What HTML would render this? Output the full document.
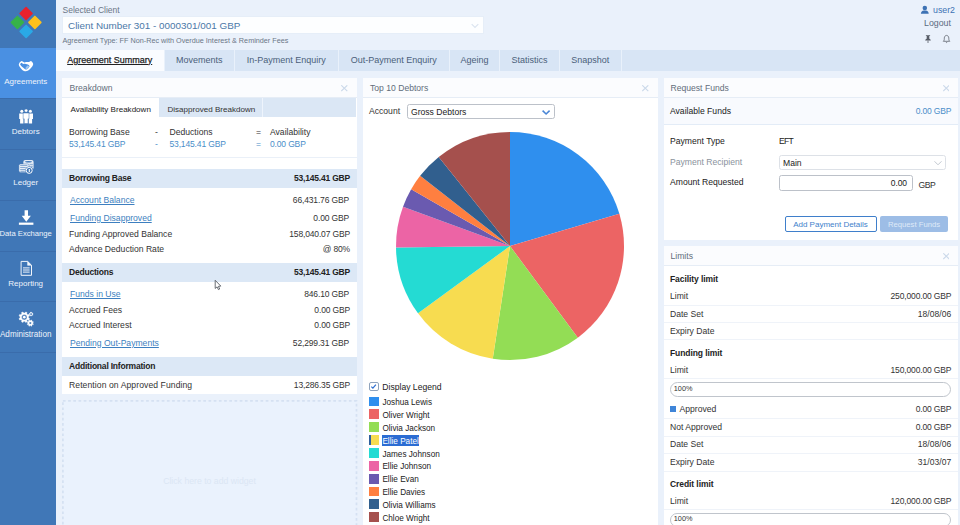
<!DOCTYPE html>
<html lang="en"><head><meta charset="utf-8"><title>Agreement Summary</title>
<style>
*{box-sizing:border-box;margin:0;padding:0}
html,body{width:960px;height:525px;overflow:hidden}
body{font-family:"Liberation Sans",sans-serif;font-size:8.5px;color:#333;background:#eaf1fb;position:relative}
.abs,.t{position:absolute;white-space:nowrap}
.t{line-height:12px;font-size:8.6px}
.r{text-align:right;font-size:8.5px;letter-spacing:-0.15px}
.b{font-weight:bold;color:#222;font-size:8.5px;letter-spacing:-0.2px}
.blue{color:#4a8ec9;font-size:8.5px;letter-spacing:-0.15px}
.lnk{color:#3d7fc0;text-decoration:underline}
#side{position:absolute;left:0;top:0;width:55.7px;overflow:hidden;height:525px;background:#4077b7}
.nav{position:absolute;left:0;width:57px;height:51.8px;border-bottom:1px solid #3a6cab;color:#fff;text-align:center}
.nav span{position:absolute;left:-12px;right:-6.4px;top:28.6px;font-size:8px;line-height:10px;color:#edf3fb}
.nav.on{background:#4a90e2}
.nav svg{position:absolute}
#tabs{position:absolute;left:55.7px;top:49.5px;width:905px;height:21px;background:#d8e5f5}
.tab{position:absolute;top:0;height:21px;border-right:1px solid #e9f1fb;font-size:9px;line-height:21px;color:#4b5f7a;text-align:center}
.tab.on{background:#fafcff;color:#222;text-decoration:underline;-webkit-text-stroke:0.25px #222}
.panel{position:absolute;background:#fff}
.ph{position:absolute;left:0;top:0;right:0;height:19.7px;background:#fbfcfe;border-bottom:1px solid #e6edf6;color:#626d7b}
.band{position:absolute;left:0;right:0;height:19px;background:#dce8f6}
.sep{position:absolute;left:0;right:0;height:1px;background:#eff3f9}
</style></head><body>

<div id="side">
  <svg class="abs" style="left:0;top:0" width="56" height="48" viewBox="0 0 56 48">
    <path d="M26.1 7.55L32.050 13.5L26.1 19.45L20.150 13.5Z" fill="#e8212d" stroke="#e8212d" stroke-width="1.6" stroke-linejoin="round"/>
    <path d="M17.4 16.45L23.349 22.4L17.4 28.349L11.45 22.4Z" fill="#37b24a" stroke="#37b24a" stroke-width="1.6" stroke-linejoin="round"/>
    <path d="M34.9 16.45L40.85 22.4L34.9 28.349L28.95 22.4Z" fill="#fdc11c" stroke="#fdc11c" stroke-width="1.6" stroke-linejoin="round"/>
    <path d="M26.1 25.45L32.050 31.4L26.1 37.35L20.150 31.4Z" fill="#2aa9e6" stroke="#2aa9e6" stroke-width="1.6" stroke-linejoin="round"/>
  </svg>
  <div class="nav on" style="top:48px;height:51.2px"><span>Agreements</span></div>
  <div class="nav" style="top:98.2px"><span>Debtors</span></div>
  <div class="nav" style="top:149px"><span>Ledger</span></div>
  <div class="nav" style="top:199.8px"><span style="font-size:7.65px;top:29.2px">Data Exchange</span></div>
  <div class="nav" style="top:250.6px"><span>Reporting</span></div>
  <div class="nav" style="top:301.4px"><span style="font-size:8.15px">Administration</span></div>
  <svg class="abs" style="left:0;top:48px" width="56" height="310" viewBox="0 48 56 310">
    <!-- handshake -->
    <path d="M18.8 64.6C18.9 63.2 20 61.6 21.6 60.9C22.8 61.2 23.6 61.9 24.4 62.4C26 61.9 27.6 61.8 29 62C29.6 61.5 30.2 61 30.8 60.9C32.2 61.6 33.2 62.8 33.2 64.2C33 65.400 32.300 66.500 31.400 67.600C30.400 68.800 29.300 69.900 28.200 70.600C27.200 71.200 26 71.500 24.800 71.300C23.800 71.200 22.900 70.800 22.300 70.100C21.300 69.100 20.200 67.700 19.500 66.500C19.100 65.900 18.800 65.200 18.800 64.600Z" fill="#fff"/>
    <path d="M20.1 64.300C20.500 63.500 21 62.900 21.600 62.700C22.300 63.100 22.800 63.700 23.400 64.100C24.200 63.800 25 63.700 25.600 63.900C26.600 64 27.600 64.300 28.400 64.800C29 65.300 29.500 65.800 29.600 66.300C29.200 67.200 28.500 68.100 27.700 68.800C27 69.400 26.300 69.700 25.700 69.500C24.800 69.100 24 68.400 23.300 67.800C22.400 67.100 21.500 66.300 20.800 65.500C20.400 65.100 20.100 64.700 20.100 64.300Z" fill="#4a90e2"/>
    <path d="M25.300 67.900L27.400 65.400L29.400 66.400L28 68.500L26.300 69.400Z" fill="#9cc6f2"/>
    <!-- debtors -->
    <g fill="#fff">
      <circle cx="21.8" cy="111.3" r="1.5"/><path d="M19.2 113.6h5.2v5.3h-0.9v4.7h-3.4v-4.7h-0.9z"/>
      <circle cx="30.4" cy="111.3" r="1.5"/><path d="M27.8 113.6h5.2v5.3h-0.9v4.7h-3.4v-4.7h-0.9z"/>
      <circle cx="26.1" cy="110.6" r="1.7" stroke="#4077b7" stroke-width="0.5"/><path d="M23.2 113h5.8v5.8h-1v4.8h-3.8v-4.8h-1z" stroke="#4077b7" stroke-width="0.5"/>
    </g>
    <!-- ledger -->
    <rect x="23.3" y="160" width="10.3" height="9.8" rx="2" fill="#f2f6fb" opacity="0.92"/>
    <ellipse cx="28.5" cy="161.7" rx="3.5" ry="0.75" fill="#4077b7"/>
    <path d="M29.600 164.400h3.200M30.500 166.300h2.300" stroke="#4077b7" stroke-width="0.55"/>
    <rect x="18.900" y="164" width="10.200" height="8.400" rx="1.600" fill="#f2f6fb" stroke="#4077b7" stroke-width="0.5"/>
    <path d="M20.200 165.600h7.200M20.200 167.600h5.600M20.200 169.600h4.800M20.400 171.300h4.400" stroke="#4077b7" stroke-width="0.65"/>
    <circle cx="29.200" cy="170.400" r="3.900" fill="#4077b7"/>
    <circle cx="29.200" cy="170.400" r="3" fill="none" stroke="#fff" stroke-width="1"/>
    <path d="M29.300 168.900v3" fill="none" stroke="#fff" stroke-width="1.1"/>
    <!-- download -->
    <path d="M24.6 210.3h3.4v5.4h2.9l-4.6 6l-4.6-6h2.9z" fill="#fff"/>
    <rect x="18.9" y="222.6" width="14.5" height="2.2" fill="#fff"/>
    <!-- report -->
    <g fill="none" stroke="#f2f6fb">
      <path d="M21.1 261.4h6.6l3.8 3.8v10.1h-10.4z" stroke-width="1"/>
      <path d="M27.600 261.600v3.700h3.700z" stroke-width="0.6" fill="#f2f6fb"/>
      <path d="M23 267.9h6.600M23 270h6.600M23 272.100h6.600" stroke-width="1"/>
    </g>
    <!-- gears -->
    <path d="M28.45 317.86L29.54 318.50L28.93 319.99L27.70 319.67L26.77 320.60L27.09 321.83L25.60 322.44L24.96 321.35L23.64 321.35L23.00 322.44L21.51 321.83L21.83 320.60L20.90 319.67L19.67 319.99L19.06 318.50L20.15 317.86L20.15 316.54L19.06 315.90L19.67 314.41L20.90 314.73L21.83 313.80L21.51 312.57L23.00 311.96L23.64 313.05L24.96 313.05L25.60 311.96L27.09 312.57L26.77 313.80L27.70 314.73L28.93 314.41L29.54 315.90L28.45 316.54ZM21.60 317.20a2.7 2.7 0 1 0 5.4 0a2.7 2.7 0 1 0 -5.4 0Z" fill="#fff" fill-rule="evenodd" stroke="#fff" stroke-width="0.4" stroke-linejoin="round"/>
    <circle cx="24.3" cy="317.2" r="1.35" fill="#fff"/>
    <path d="M32.83 314.37L33.33 314.65L33.07 315.29L32.52 315.13L32.13 315.52L32.29 316.07L31.65 316.33L31.37 315.83L30.83 315.83L30.55 316.33L29.91 316.07L30.07 315.52L29.68 315.13L29.13 315.29L28.87 314.65L29.37 314.37L29.37 313.83L28.87 313.55L29.13 312.91L29.68 313.07L30.07 312.68L29.91 312.13L30.55 311.87L30.83 312.37L31.37 312.37L31.65 311.87L32.29 312.13L32.13 312.68L32.52 313.07L33.07 312.91L33.33 313.55L32.83 313.83ZM30.25 314.10a0.85 0.85 0 1 0 1.7 0a0.85 0.85 0 1 0 -1.7 0Z" fill="#e3ecf7" fill-rule="evenodd"/>
    <path d="M32.82 323.50L33.50 323.90L33.13 324.80L32.36 324.60L31.80 325.16L32.00 325.93L31.10 326.30L30.70 325.62L29.90 325.62L29.50 326.30L28.60 325.93L28.80 325.16L28.24 324.60L27.47 324.80L27.10 323.90L27.78 323.50L27.78 322.70L27.10 322.30L27.47 321.40L28.24 321.60L28.80 321.04L28.60 320.27L29.50 319.90L29.90 320.58L30.70 320.58L31.10 319.90L32.00 320.27L31.80 321.04L32.36 321.60L33.13 321.40L33.50 322.30L32.82 322.70ZM29.15 323.10a1.15 1.15 0 1 0 2.3 0a1.15 1.15 0 1 0 -2.3 0Z" fill="#fff" fill-rule="evenodd" stroke="#fff" stroke-width="0.3" stroke-linejoin="round"/>
  </svg>
</div>

<!-- header -->
<div class="t" style="left:62.5px;top:3.7px;font-size:8.5px;color:#6a7686">Selected Client</div>
<div class="abs" style="left:62px;top:16.4px;width:421.5px;height:18px;background:#fdfeff;border:1px solid #e6eef8"></div>
<div class="t" style="left:68px;top:18.5px;font-size:9.9px;color:#4b78a8;line-height:13px">Client Number 301 - 0000301/001 GBP</div>
<svg class="abs" style="left:469.6px;top:22px" width="10" height="8" viewBox="0 0 10 8"><path d="M1.7 2.2L5 5.5L8.300 2.2" fill="none" stroke="#dbe4f0" stroke-width="1.2"/></svg>
<div class="t" style="left:62.5px;top:35.7px;font-size:7.25px;color:#6a7686;line-height:10px">Agreement Type: FF Non-Rec with Overdue Interest &amp; Reminder Fees</div>
<svg class="abs" style="left:918px;top:3px" width="14" height="13" viewBox="918 3 14 13"><circle cx="924.8" cy="8" r="2.25" fill="#3d72b4"/><path d="M920.9 13.7c0-2 1.2-3 3-3.3h1.8c1.8 0.3 3 1.3 3 3.3z" fill="#3d72b4"/></svg>
<div class="t" style="left:933px;top:4.3px;font-size:8.8px;color:#3d72b4">user2</div>
<div class="t" style="left:924px;top:17.3px;font-size:8.8px;color:#5b6b80">Logout</div>
<svg class="abs" style="left:922px;top:33px" width="32" height="12" viewBox="922 33 32 12">
  <path d="M925.9 35.2h4.2v0.9h-0.8v2.7c0.9 0.3 1.5 0.9 1.5 1.8h-5.6c0-0.9 0.6-1.5 1.5-1.8v-2.7h-0.8z" fill="#585d67"/>
  <path d="M928 40.6v2.4" stroke="#585d67" stroke-width="0.8"/>
  <path d="M943.3 41.3c1-0.8 1-1.8 1-3.2c0-1.500 1-2.700 2.250-2.700s2.250 1.200 2.250 2.700c0 1.400 0 2.400 1 3.200z" fill="none" stroke="#5a5f68" stroke-width="0.75" stroke-linejoin="round"/>
  <path d="M945.9 42.2c0.300 0.500 1.000 0.500 1.300 0" fill="none" stroke="#5a5f68" stroke-width="0.8"/>
</svg>

<div id="tabs">
  <div class="tab on" style="left:0;width:109px">Agreement Summary</div>
  <div class="tab" style="left:109px;width:70px">Movements</div>
  <div class="tab" style="left:179px;width:104px">In-Payment Enquiry</div>
  <div class="tab" style="left:283px;width:111px">Out-Payment Enquiry</div>
  <div class="tab" style="left:394px;width:50.5px">Ageing</div>
  <div class="tab" style="left:444.5px;width:59.5px">Statistics</div>
  <div class="tab" style="left:504px;width:62px">Snapshot</div>
</div>

<!-- Breakdown panel -->
<div class="panel" style="left:62px;top:78px;width:295px;height:316px">
  <div class="ph"><div class="t" style="left:7.5px;top:4px">Breakdown</div><svg class="abs" style="left:279.2px;top:7.4px" width="6.6" height="6.4" viewBox="0 0 6.6 6.4"><path d="M0.3 0.3L6.3 6.1M6.3 0.3L0.3 6.1" stroke="#cbd9ea" stroke-width="1.1" fill="none"/></svg></div>
  <div class="abs" style="left:0;top:19.7px;width:294.2px;height:19.3px;background:#dbe7f5"></div>
  <div class="abs" style="left:0;top:19.7px;width:97px;height:19.3px;background:#fff"></div>
  <div class="abs" style="left:199.5px;top:19.7px;width:1px;height:19.3px;background:#eef4fc"></div>
  <div class="t" style="left:8.5px;top:25.6px;font-size:8.05px;color:#222">Availability Breakdown</div>
  <div class="t" style="left:105.5px;top:25.6px;font-size:8.05px;color:#333">Disapproved Breakdown</div>
  <div class="t" style="left:7px;top:47.5px">Borrowing Base</div>
  <div class="t" style="left:93px;top:47.5px">-</div>
  <div class="t" style="left:107.5px;top:47.5px">Deductions</div>
  <div class="t" style="left:194px;top:47.5px">=</div>
  <div class="t" style="left:208px;top:47.5px">Availability</div>
  <div class="t blue" style="left:7px;top:60px">53,145.41 GBP</div>
  <div class="t blue" style="left:93px;top:60px">-</div>
  <div class="t blue" style="left:107.5px;top:60px">53,145.41 GBP</div>
  <div class="t blue" style="left:194px;top:60px">=</div>
  <div class="t blue" style="left:208px;top:60px">0.00 GBP</div>
  <div class="abs" style="left:0;top:79px;width:295px;height:1.3px;background:#eaf0f8"></div>

  <div class="band" style="top:91px"></div>
  <div class="t b" style="left:7px;top:94px">Borrowing Base</div>
  <div class="t b r" style="right:7px;top:94px">53,145.41 GBP</div>
  <div class="t lnk" style="left:8px;top:116px">Account Balance</div>
  <div class="t r" style="right:8px;top:116px">66,431.76 GBP</div>
  <div class="t lnk" style="left:8px;top:134px">Funding Disapproved</div>
  <div class="t r" style="right:8px;top:134px">0.00 GBP</div>
  <div class="t" style="left:7px;top:149.5px">Funding Approved Balance</div>
  <div class="t r" style="right:7px;top:149.5px">158,040.07 GBP</div>
  <div class="t" style="left:7px;top:165px">Advance Deduction Rate</div>
  <div class="t r" style="right:7px;top:165px">@ 80%</div>

  <div class="band" style="top:185px"></div>
  <div class="t b" style="left:7px;top:188px">Deductions</div>
  <div class="t b r" style="right:7px;top:188px">53,145.41 GBP</div>
  <div class="t lnk" style="left:8px;top:210px">Funds in Use</div>
  <div class="t r" style="right:8px;top:210px">846.10 GBP</div>
  <div class="t" style="left:7px;top:225.5px">Accrued Fees</div>
  <div class="t r" style="right:7px;top:225.5px">0.00 GBP</div>
  <div class="t" style="left:7px;top:241px">Accrued Interest</div>
  <div class="t r" style="right:7px;top:241px">0.00 GBP</div>
  <div class="t lnk" style="left:8px;top:258.5px">Pending Out-Payments</div>
  <div class="t r" style="right:8px;top:258.5px">52,299.31 GBP</div>

  <div class="band" style="top:279px"></div>
  <div class="t b" style="left:7px;top:282px">Additional Information</div>
  <div class="t" style="left:7px;top:301px;letter-spacing:0.08px">Retention on Approved Funding</div>
  <div class="t r" style="right:7px;top:301px">13,286.35 GBP</div>
</div>
<svg class="abs" style="left:60px;top:398px" width="300" height="127" viewBox="60 398 300 127"><rect x="62.9" y="400.9" width="293.6" height="140" fill="#eaf2fd" stroke="#d5e1f2" stroke-width="1.7" stroke-dasharray="2.7 2.5"/></svg>
<div class="t" style="left:62px;width:295px;top:475px;text-align:center;color:#dbe6f4;font-size:8.7px">Click here to add widget</div>

<!-- Top 10 Debtors -->
<div class="panel" style="left:363px;top:78px;width:295px;height:460px">
  <div class="ph"><div class="t" style="left:7px;top:4px">Top 10 Debtors</div><svg class="abs" style="left:279.2px;top:7.4px" width="6.6" height="6.4" viewBox="0 0 6.6 6.4"><path d="M0.3 0.3L6.3 6.1M6.3 0.3L0.3 6.1" stroke="#cbd9ea" stroke-width="1.1" fill="none"/></svg></div>
  <div class="t" style="left:6px;top:27px">Account</div>
  <div class="abs" style="left:44px;top:26.3px;width:147.5px;height:14.4px;border:1px solid #bcc1c9;border-radius:2.5px;background:#fff"></div>
  <div class="t" style="left:48px;top:27.5px;color:#222">Gross Debtors</div>
  <svg class="abs" style="left:178px;top:31px" width="10" height="7" viewBox="0 0 10 7"><path d="M1.6 1.7L5.1 5L8.6 1.7" fill="none" stroke="#4a86d6" stroke-width="1.6"/></svg>
  <!--PIE-->
  <svg class="abs" style="left:0;top:0" width="295" height="300" viewBox="0 0 295 300"><path d="M147 168L147.00 54.00A114 114 0 0 1 256.36 135.81Z" fill="#2f8fee"/><path d="M147 168L256.36 135.81A114 114 0 0 1 214.81 259.64Z" fill="#ec6464"/><path d="M147 168L214.81 259.64A114 114 0 0 1 129.76 280.69Z" fill="#93dd55"/><path d="M147 168L129.76 280.69A114 114 0 0 1 55.01 235.33Z" fill="#f7dc50"/><path d="M147 168L55.01 235.33A114 114 0 0 1 33.01 169.39Z" fill="#24dbd3"/><path d="M147 168L33.01 169.39A114 114 0 0 1 40.01 128.64Z" fill="#ec64a5"/><path d="M147 168L40.01 128.64A114 114 0 0 1 48.17 111.17Z" fill="#6a5ab0"/><path d="M147 168L48.17 111.17A114 114 0 0 1 57.17 97.81Z" fill="#ff7f40"/><path d="M147 168L57.17 97.81A114 114 0 0 1 75.72 79.03Z" fill="#315f8e"/><path d="M147 168L75.72 79.03A114 114 0 0 1 147.00 54.00Z" fill="#a5504d"/></svg>
  <div class="abs" style="left:6.4px;top:304.4px;width:9.2px;height:9px;border:1px solid #8fa3bd;border-radius:2px;background:#fff"></div>
  <svg class="abs" style="left:6.4px;top:304.4px" width="9.2" height="9" viewBox="0 0 9.2 9"><path d="M2.3 4.6L3.9 6.2L6.9 2.7" fill="none" stroke="#2f6fd0" stroke-width="1.2"/></svg>
  <div class="t" style="left:19.3px;top:303.02px;color:#222">Display Legend</div>
  <div class="abs" style="left:6.2px;top:318.50px;width:9.7px;height:9.9px;background:#2f8fee"></div>
  <div class="t" style="left:19.4px;top:319px;color:#222;font-size:8.2px">Joshua Lewis</div>
  <div class="abs" style="left:6.2px;top:331.37px;width:9.7px;height:9.9px;background:#ec6464"></div>
  <div class="t" style="left:19.4px;top:332px;color:#222;font-size:8.2px">Oliver Wright</div>
  <div class="abs" style="left:6.2px;top:344.24px;width:9.7px;height:9.9px;background:#93dd55"></div>
  <div class="t" style="left:19.4px;top:345px;color:#222;font-size:8.2px">Olivia Jackson</div>
  <div class="abs" style="left:6.2px;top:357.11px;width:9.7px;height:9.9px;background:#f7dc50;border-left:2px solid #2f5f9e"></div>
  <div class="abs" style="left:19.3px;top:356.9px;width:37.1px;height:11px;background:#2b6cd3"></div>
  <div class="t" style="left:19.4px;top:358px;color:#fff;font-size:8.2px">Ellie Patel</div>
  <div class="abs" style="left:6.2px;top:369.98px;width:9.7px;height:9.9px;background:#24dbd3"></div>
  <div class="t" style="left:19.4px;top:371px;color:#222;font-size:8.2px">James Johnson</div>
  <div class="abs" style="left:6.2px;top:382.85px;width:9.7px;height:9.9px;background:#ec64a5"></div>
  <div class="t" style="left:19.4px;top:383px;color:#222;font-size:8.2px">Ellie Johnson</div>
  <div class="abs" style="left:6.2px;top:395.72px;width:9.7px;height:9.9px;background:#6a5ab0"></div>
  <div class="t" style="left:19.4px;top:396px;color:#222;font-size:8.2px">Ellie Evan</div>
  <div class="abs" style="left:6.2px;top:408.59px;width:9.7px;height:9.9px;background:#ff7f40"></div>
  <div class="t" style="left:19.4px;top:409px;color:#222;font-size:8.2px">Ellie Davies</div>
  <div class="abs" style="left:6.2px;top:421.46px;width:9.7px;height:9.9px;background:#315f8e"></div>
  <div class="t" style="left:19.4px;top:422px;color:#222;font-size:8.2px">Olivia Williams</div>
  <div class="abs" style="left:6.2px;top:434.33px;width:9.7px;height:9.9px;background:#a5504d"></div>
  <div class="t" style="left:19.4px;top:435px;color:#222;font-size:8.2px">Chloe Wright</div>
  <!--/PIE-->
</div>

<!-- Request Funds -->
<div class="panel" style="left:663.5px;top:78px;width:294.3px;height:161.5px">
  <div class="ph"><div class="t" style="left:7px;top:4px">Request Funds</div><svg class="abs" style="left:279px;top:7.4px" width="6.6" height="6.4" viewBox="0 0 6.6 6.4"><path d="M0.3 0.3L6.3 6.1M6.3 0.3L0.3 6.1" stroke="#cbd9ea" stroke-width="1.1" fill="none"/></svg></div>
  <div class="abs" style="left:0;top:20px;width:294px;height:27px;background:#f8fafe;border-bottom:1px solid #e3ecf7"></div>
  <div class="t" style="left:6.5px;top:26.5px;color:#222">Available Funds</div>
  <div class="t r blue" style="right:6.5px;top:26.5px">0.00 GBP</div>
  <div class="t" style="left:6.5px;top:56.8px;color:#222">Payment Type</div>
  <div class="t" style="left:115.6px;top:56.8px;color:#222;letter-spacing:-0.8px">EFT</div>
  <div class="t" style="left:6.5px;top:78px;color:#8a929c">Payment Recipient</div>
  <div class="abs" style="left:115.5px;top:77.3px;width:166.5px;height:14.4px;border:1px solid #dde1e7;border-radius:2.5px;background:#fff"></div>
  <svg class="abs" style="left:269px;top:82px" width="10" height="7" viewBox="0 0 10 7"><path d="M1.5 1.3L5 4.8L8.5 1.3" fill="none" stroke="#c3c9d1" stroke-width="1"/></svg>
  <div class="t" style="left:119.5px;top:79px;color:#222">Main</div>
  <div class="t" style="left:6.5px;top:98px;color:#222">Amount Requested</div>
  <div class="abs" style="left:115.5px;top:97.3px;width:133.6px;height:15.5px;border:1px solid #bcc1c9;border-radius:2.5px;background:#fff"></div>
  <div class="t r" style="right:51px;top:99px;color:#222">0.00</div>
  <div class="t" style="left:255px;top:101px;color:#333;letter-spacing:-0.4px">GBP</div>
  <div class="abs" style="left:121px;top:137.8px;width:92px;height:16.4px;border:1px solid #3f7fcb;border-radius:2px;background:#fff;color:#3f7fcb;text-align:center;line-height:15.4px;font-size:8px">Add Payment Details</div>
  <div class="abs" style="left:216.5px;top:137.8px;width:68px;height:16.4px;border-radius:2px;background:#9dbde6;color:#dfeaf8;text-align:center;line-height:17.4px;font-size:7.7px">Request Funds</div>
</div>

<!-- Limits -->
<div class="panel" style="left:663.5px;top:246px;width:294.3px;height:290px">
  <div class="ph"><div class="t" style="left:7px;top:4px">Limits</div><svg class="abs" style="left:279px;top:7.4px" width="6.6" height="6.4" viewBox="0 0 6.6 6.4"><path d="M0.3 0.3L6.3 6.1M6.3 0.3L0.3 6.1" stroke="#cbd9ea" stroke-width="1.1" fill="none"/></svg></div>
  <!--LIM-->
  <div class="t b" style="left:6.5px;top:27px;letter-spacing:-0.08px">Facility limit</div>
  <div class="t " style="left:6.5px;top:44px;">Limit</div>
  <div class="t r" style="right:6.5px;top:44px;">250,000.00 GBP</div>
  <div class="sep" style="top:58.6px"></div>
  <div class="t " style="left:6.5px;top:62px;">Date Set</div>
  <div class="t r" style="right:6.5px;top:62px;letter-spacing:0.05px">18/08/06</div>
  <div class="sep" style="top:75.9px"></div>
  <div class="t " style="left:6.5px;top:79px;">Expiry Date</div>
  <div class="sep" style="top:93.2px"></div>
  <div class="t b" style="left:6.5px;top:101px;letter-spacing:-0.08px">Funding limit</div>
  <div class="t " style="left:6.5px;top:118px;">Limit</div>
  <div class="t r" style="right:6.5px;top:118px;">150,000.00 GBP</div>
  <div class="sep" style="top:131.9px"></div>
  <div class="abs" style="left:6px;top:136.3px;width:281px;height:14.3px;border:1px solid #c0c5cc;border-radius:8px;background:#fff"></div>
  <div class="t " style="left:10.3px;top:137px;font-size:7.3px">100%</div>
  <div class="abs" style="left:6.5px;top:160.3px;width:6px;height:5.6px;background:#3f85d8"></div>
  <div class="t " style="left:16px;top:157px;">Approved</div>
  <div class="t r" style="right:6.5px;top:157px;">0.00 GBP</div>
  <div class="sep" style="top:172.2px"></div>
  <div class="t " style="left:6.5px;top:175px;">Not Approved</div>
  <div class="t r" style="right:6.5px;top:175px;">0.00 GBP</div>
  <div class="sep" style="top:189.7px"></div>
  <div class="t " style="left:6.5px;top:192px;">Date Set</div>
  <div class="t r" style="right:6.5px;top:192px;letter-spacing:0.05px">18/08/06</div>
  <div class="sep" style="top:207.2px"></div>
  <div class="t " style="left:6.5px;top:210px;">Expiry Date</div>
  <div class="t r" style="right:6.5px;top:210px;letter-spacing:0.05px">31/03/07</div>
  <div class="sep" style="top:224.7px"></div>
  <div class="t b" style="left:6.5px;top:232px;letter-spacing:-0.08px">Credit limit</div>
  <div class="t " style="left:6.5px;top:249px;">Limit</div>
  <div class="t r" style="right:6.5px;top:249px;">120,000.00 GBP</div>
  <div class="sep" style="top:263.2px"></div>
  <div class="abs" style="left:6px;top:266.6px;width:281px;height:14.3px;border:1px solid #c0c5cc;border-radius:8px;background:#fff"></div>
  <div class="t " style="left:10.3px;top:267px;font-size:7.3px">100%</div>
  <!--/LIM-->
</div>
<svg class="abs" style="left:212px;top:278px" width="12" height="14" viewBox="212 278 12 14"><path d="M215.2 280.3L215.2 288.4L217.1 286.9L218.4 289.6L219.7 289L218.4 286.4L220.8 286.1Z" fill="#fff" stroke="#3a3f47" stroke-width="0.75" stroke-linejoin="round"/></svg>

</body></html>
